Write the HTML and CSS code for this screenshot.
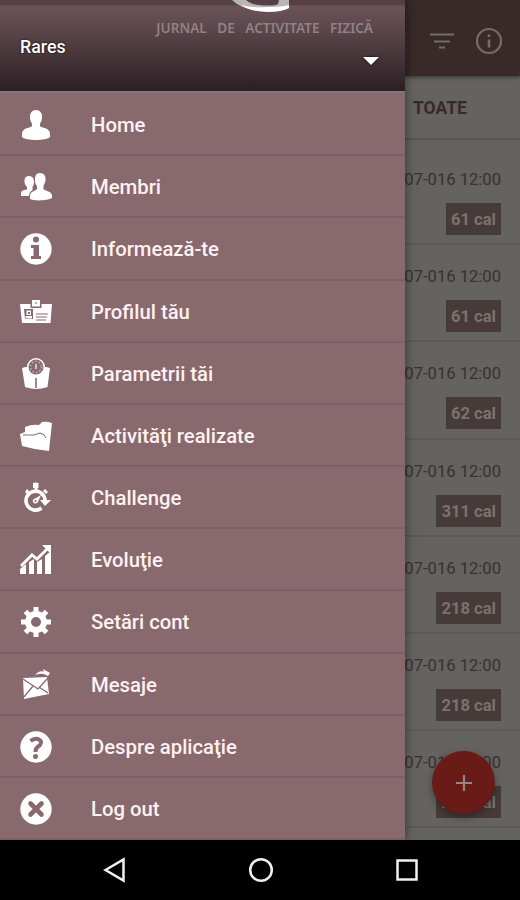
FILE: index.html
```html
<!DOCTYPE html>
<html lang="ro">
<head>
	<meta charset="UTF-8">
	<title>Jurnal de activitate fizică</title>
	<link rel="stylesheet" href="styles.css">
</head>
<body>
	<div id="screen">
		<nav id="drawer">
			<header id="drawer_header">
				<svg class="logo" width="70" height="12" viewBox="0 0 70 12">
					<path d="M11 0H25Q30 5 42 5.500Q54 6 57 4L58 0H68V8Q61 11 47 11Q22 11 11 0Z" fill="#b9b5b5"/>
					<path d="M20 5Q32 8 47 7Q60 7 68 5V8Q61 12 47 12Q30 12 20 5Z" fill="#fff"/>
				</svg>
				<p class="tagline"><span>JURNAL</span><span>DE</span><span>ACTIVITATE</span><span>FIZICĂ</span></p>
				<div class="account">
					<span class="user">Rares</span>
					<span class="arrow"></span>
				</div>
			</header>
			<ul id="menu">
				<li>
					<svg viewBox="0 0 32 32"><path d="M16 1C20 1 22 4 22 8C22 12 20.500 13 20 15V17C21 19.500 30 18 30 25V28C27 32 5 32 2 28V25C2 18 11 19.500 12 17V15C11.500 13 10 12 10 8C10 4 12 1 16 1Z"/></svg>
					<span>Home</span>
				</li>
				<li>
					<svg viewBox="0 0 32 32"><path d="M9 5Q14 5 14 11Q14 14 12.500 16V19Q9 21 9 25H1V22Q1 19 7 18.500V16Q4 13 4.500 9Q5 5 9 5Z"/><path d="M20 2C24 2 26 5 25.500 9C25.300 12 24 13 23.500 15V18C25 20 32 20 32 25V27C27 30 13 30 10 28V25C10 20 16 20 17 18V15C15 13 15 11 15 8C15 4 17 2 20 2Z"/></svg>
					<span>Membri</span>
				</li>
				<li>
					<svg viewBox="0 0 32 32"><circle cx="16" cy="16" r="15.700"/><circle class="cut" cx="16" cy="6.500" r="3"/><path class="cut" d="M11 12H19V23H21V26H11V23H13.500V15H11Z"/></svg>
					<span>Informează-te</span>
				</li>
				<li>
					<svg viewBox="0 0 32 32"><path d="M0 8H32L30.500 27H2Z"/><path class="cut" d="M10.500 6H21.500V12H10.500Z"/><path d="M12 4H20V10.500H12Z"/><path class="line" stroke-width="1" d="M16 6V8M16 18H28M16 21H27M16 24H26"/><path class="cut" d="M4 13H13V23H5Z"/><path d="M6.500 14.500H11V19H6.500ZM5.500 20H12V22.500H5.500Z"/><path class="cut" d="M8 16H10V18H8Z"/></svg>
					<span>Profilul tău</span>
				</li>
				<li>
					<svg viewBox="0 0 32 32"><path d="M2 10Q8 8 8 10Q9 17 16 17Q23 17 24 10Q24 8 30 10L27.500 29Q16 33 5 29Z"/><circle cx="16" cy="9" r="9"/><circle class="cut" cx="16" cy="9" r="7.500"/><circle cx="16" cy="9" r="5.500" fill="none" stroke="#fff" stroke-opacity=".5" stroke-width="1.500" stroke-dasharray="1.500 2"/><path d="M15 6H17V11H15Z" opacity=".6"/><path class="line" stroke-width="1.600" d="M16 30V20"/></svg>
					<span>Parametrii tăi</span>
				</li>
				<li>
					<svg viewBox="0 0 32 32"><path d="M0 14L5 12V7Q12 4 19 5L22 2Q27 1 32 3L29 31Q16 30 2 26Z"/><path class="line" stroke-width="1" d="M3 15L14 15L20 13Q25 14 26 18"/></svg>
					<span>Activităţi realizate</span>
				</li>
				<li>
					<svg viewBox="0 0 32 32"><path d="M13 1Q16 0 18.500 1V6H17.500V9H14.500V6H13ZM5 10L7 7L9 9L7 12ZM23 9L25 7L28 10L26 12Z"/><path d="M25 18A9.500 9.500 0 1 0 21.500 26" fill="none" stroke="#fff" stroke-width="3.600"/><path d="M20 18H31L25 24ZM21 13L18 20Q15 23 13 20Q12 17 16 16Z"/><circle class="cut" cx="15.500" cy="19" r="1"/></svg>
					<span>Challenge</span>
				</li>
				<li>
					<svg viewBox="0 0 32 32"><path d="M0 25L6 20V30H0ZM9 18L14 15V30H9ZM17 18L22 15V30H17ZM25 12L31 7V30H25Z"/><path d="M1 22L12 11L17 15L28 4" fill="none" stroke="#fff" stroke-width="2.800"/><path d="M22 1H31V10L28 7L25 4Z"/></svg>
					<span>Evoluţie</span>
				</li>
				<li>
					<svg viewBox="0 0 32 32"><circle cx="16" cy="16" r="8" fill="none" stroke="#fff" stroke-width="6"/><path d="M16 1V6M16 26V31M1 16H6M26 16H31M5.400 5.400L9 9M23 23L26.600 26.600M26.600 5.400L23 9M9 23L5.400 26.600" stroke="#fff" stroke-width="5"/></svg>
					<span>Setări cont</span>
				</li>
				<li>
					<svg viewBox="0 0 32 32"><path d="M3 9L27 8L29 25L4 30ZM15 6Q19 1 24 2.500L23 0L30 4L28 7L24 5Q20 4 15 6Z"/><path class="line" stroke-width="1.300" d="M3 10L18 20L28 9M4 28L13 17M28 24L19 18"/></svg>
					<span>Mesaje</span>
				</li>
				<li>
					<svg viewBox="0 0 32 32"><circle cx="16" cy="16" r="15.700"/><path class="line" stroke-width="4" d="M10.500 10Q14 7 18 8Q23 10 20 14L17 16.500Q15.500 18 15.500 21"/><circle class="cut" cx="15.500" cy="25.500" r="2.500"/></svg>
					<span>Despre aplicaţie</span>
				</li>
				<li>
					<svg viewBox="0 0 32 32"><circle cx="16" cy="16" r="15.700"/><path class="line" stroke-width="4.600" stroke-linecap="round" d="M10.500 10.500L21.500 21.500M21.500 10.500L10.500 21.500"/></svg>
					<span>Log out</span>
				</li>
			</ul>
		</nav>
		<main id="content">
			<div id="toolbar">
				<svg width="24" height="16" viewBox="0 0 24 16"><path d="M0 1.500H24M4 8.500H20M9 14.500H15" fill="none" stroke="#756c69" stroke-width="2.200"/></svg>
				<svg width="28" height="28" viewBox="0 0 28 28"><circle cx="14" cy="14" r="12" fill="none" stroke="#756c69" stroke-width="2.200"/><path d="M12.700 7.500H15.300V10H12.700ZM12.700 12.500H15.300V20.500H12.700Z" fill="#756c69"/></svg>
			</div>
			<div id="tab">TOATE</div>
			<div id="entries">
				<div class="entry"><span class="date">07-016 12:00</span><span class="cal">61 cal</span></div>
				<div class="entry"><span class="date">07-016 12:00</span><span class="cal">61 cal</span></div>
				<div class="entry"><span class="date">07-016 12:00</span><span class="cal">62 cal</span></div>
				<div class="entry"><span class="date">07-016 12:00</span><span class="cal">311 cal</span></div>
				<div class="entry"><span class="date">07-016 12:00</span><span class="cal">218 cal</span></div>
				<div class="entry"><span class="date">07-016 12:00</span><span class="cal">218 cal</span></div>
				<div class="entry"><span class="date">07-016 12:00</span><span class="cal">218 cal</span></div>
			</div>
			<button id="add_button"><svg width="16" height="16" viewBox="0 0 16 16"><path d="M8 0V16M0 8H16" stroke="#988583" stroke-width="2.200"/></svg></button>
		</main>
	</div>
	<footer id="navbar">
		<svg width="24" height="28" viewBox="0 0 24 28"><path d="M2.500 14L20.500 3.500V24.500Z"/></svg>
		<svg width="28" height="28" viewBox="0 0 28 28"><circle cx="14" cy="14" r="10.800"/></svg>
		<svg width="24" height="28" viewBox="0 0 24 28"><path d="M2.500 4.500H21.500V23.500H2.500Z"/></svg>
	</footer>
</body>
</html>
```
FILE: styles.css
```css
* {
	box-sizing: border-box;
}
body {
	margin: 0;
	width: 520px;
	height: 900px;
	overflow: hidden;
	display: flex;
	flex-direction: column;
	background: #000;
	font-family: Roboto, sans-serif;
}
#screen {
	height: 840px;
	display: flex;
}
#drawer {
	width: 405px;
	height: 840px;
	display: flex;
	flex-direction: column;
	background: #87696e;
	box-shadow: 0 0 10px rgba(0,0,0,.5);
	z-index: 1;
}
#drawer_header {
	position: relative;
	height: 93px;
	border-bottom: 2px solid #81777a;
	background: linear-gradient(#523e43 0, #554146 5px, #6b5359 6px, #5e494e 25px, #2b1f23 91px);
}
.logo {
	position: absolute;
	left: 221px;
	top: 0;
}
.tagline {
	margin: 0;
	padding: 19px 32px 0 0;
	display: flex;
	justify-content: flex-end;
	gap: 10.500px;
	color: #928185;
	font: 600 13.600px/18px "Noto Sans", sans-serif;
	letter-spacing: 0;
}
.account {
	display: flex;
	justify-content: space-between;
	padding: 0 26px 0 20px;
}
.user {
	color: #fff;
	font-size: 17.800px;
	font-weight: 500;
	line-height: 19px;
	text-shadow: 0 0 2px #000;
}
.arrow {
	margin-top: 20px;
	border: 8px solid transparent;
	border-top-color: #fff;
	border-bottom: 0;
	height: 8px;
	filter: drop-shadow(0 0 1px #000);
}
#menu {
	flex: 1;
	margin: 0;
	padding: 1px 0 0;
	list-style: none;
	display: flex;
	flex-direction: column;
}
#menu li {
	flex: 1;
	display: flex;
	align-items: center;
	gap: 39px;
	padding: 2px 0 0 20px;
	border-bottom: 2px solid #7c6065;
	color: #fff0f1;
	font-size: 20.300px;
	font-weight: 500;
}
#menu svg {
	width: 32px;
	height: 32px;
	fill: #fff;
}
#menu .cut {
	fill: #87696e;
}
#menu .line {
	fill: none;
	stroke: #87696e;
}
#content {
	position: relative;
	width: 115px;
	height: 840px;
	background: #64635f;
}
#toolbar {
	height: 76px;
	display: flex;
	align-items: center;
	justify-content: flex-end;
	gap: 21px;
	padding: 6px 17px 0 0;
	background: #382a29;
	box-shadow: 0 1px 4px rgba(0,0,0,.5);
}
#tab {
	height: 64px;
	padding-left: 8px;
	border-bottom: 2px solid #575652;
	color: #382a2b;
	font-size: 17.500px;
	font-weight: 700;
	line-height: 64px;
}
#entries {
	padding-top: 8px;
}
.entry {
	height: 97.200px;
	padding: 21px 19px 0 0;
	display: flex;
	flex-direction: column;
	align-items: flex-end;
	gap: 12px;
	border-bottom: 2px solid #5b5a56;
}
.date {
	color: #3b3031;
	font-size: 16.600px;
	line-height: 22px;
	white-space: nowrap;
}
.cal {
	height: 32px;
	padding: 0 5px;
	background: #463b38;
	color: #797370;
	font-size: 16.600px;
	font-weight: 700;
	line-height: 33px;
}
#add_button {
	position: absolute;
	left: 27px;
	top: 751px;
	width: 63px;
	height: 63px;
	padding: 0;
	display: flex;
	align-items: center;
	justify-content: center;
	border: none;
	border-radius: 50%;
	background: #681b17;
	box-shadow: 0 3px 8px rgba(0,0,0,.35);
}
#navbar {
	height: 60px;
	display: flex;
	justify-content: space-between;
	align-items: center;
	padding: 0 101px 0 103px;
}
#navbar svg {
	fill: none;
	stroke: #f0f0f0;
	stroke-width: 2.500;
}
```
